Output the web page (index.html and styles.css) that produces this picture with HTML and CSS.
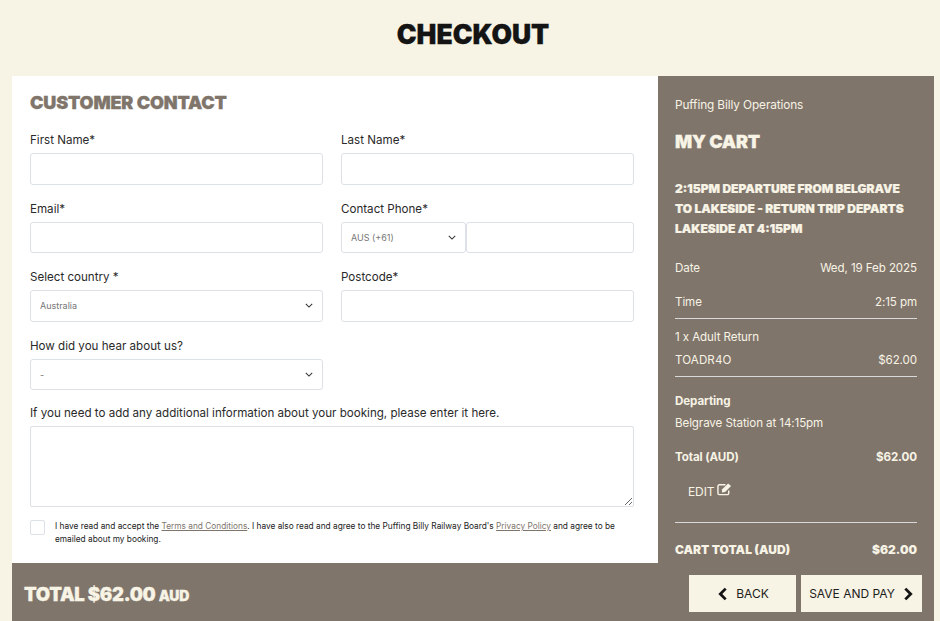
FILE: index.html
```html
<!DOCTYPE html>
<html lang="en">
<head>
<meta charset="utf-8">
<title>Checkout</title>
<link rel="stylesheet" href="styles.css">
</head>
<body>
<h1 class="page-title">CHECKOUT</h1>
<main class="checkout">
  <div class="columns">
    <form class="form">
      <h2 class="form-title">CUSTOMER CONTACT</h2>
      <div class="grid">
        <div class="field"><label class="label">First Name*</label><input class="control" type="text"></div>
        <div class="field"><label class="label">Last Name*</label><input class="control" type="text"></div>
        <div class="field"><label class="label">Email*</label><input class="control" type="text"></div>
        <div class="field"><label class="label">Contact Phone*</label>
          <div class="phone">
            <div class="select-wrap phone-code">
              <select class="control select"><option>AUS (+61)</option></select>
              <svg class="chev" viewBox="0 0 10 6"><polyline points="1,1 5,5 9,1"/></svg>
            </div>
            <input class="control phone-num" type="text">
          </div>
        </div>
        <div class="field"><label class="label">Select country *</label>
          <div class="select-wrap">
            <select class="control select"><option>Australia</option></select>
            <svg class="chev" viewBox="0 0 10 6"><polyline points="1,1 5,5 9,1"/></svg>
          </div>
        </div>
        <div class="field"><label class="label">Postcode*</label><input class="control" type="text"></div>
        <div class="field"><label class="label">How did you hear about us?</label>
          <div class="select-wrap">
            <select class="control select"><option>-</option></select>
            <svg class="chev" viewBox="0 0 10 6"><polyline points="1,1 5,5 9,1"/></svg>
          </div>
        </div>
      </div>
      <div class="field notes"><label class="label">If you need to add any additional information about your booking, please enter it here.</label>
        <textarea class="textarea"></textarea>
      </div>
      <div class="consent">
        <span class="check"></span>
        <p class="consent-text">I have read and accept the <a href="#">Terms and Conditions</a>. I have also read and agree to the Puffing Billy Railway Board's <a href="#">Privacy Policy</a> and agree to be emailed about my booking.</p>
      </div>
    </form>
    <aside class="cart">
      <p class="operator">Puffing Billy Operations</p>
      <h2 class="cart-title">MY CART</h2>
      <h3 class="trip">2:15PM DEPARTURE FROM BELGRAVE TO LAKESIDE - RETURN TRIP DEPARTS LAKESIDE AT 4:15PM</h3>
      <div class="row row-date"><span>Date</span><span>Wed, 19 Feb 2025</span></div>
      <div class="row row-time"><span>Time</span><span>2:15 pm</span></div>
      <div class="item">
        <div>1 x Adult Return</div>
        <div class="row item-code"><span class="code">TOADR4O</span><span>$62.00</span></div>
      </div>
      <div class="depart">
        <div class="strong">Departing</div>
        <div class="depart-text">Belgrave Station at 14:15pm</div>
      </div>
      <div class="row strong row-total"><span>Total (AUD)</span><span>$62.00</span></div>
      <div class="edit">EDIT
        <svg class="edit-icon" viewBox="0 0 16 14"><path class="edit-box" d="M12.5 8.5V11.5A1.5 1.5 0 0 1 11 13H2.5A1.5 1.5 0 0 1 1 11.5V4A1.5 1.5 0 0 1 2.5 2.5H9"/><path class="edit-pen" d="M5.5 7.2 11.9 1 15 3.9 8.6 10.2 5.2 10.6Z"/></svg>
      </div>
      <div class="row cart-total"><span>CART TOTAL (AUD)</span><span>$62.00</span></div>
    </aside>
  </div>
  <footer class="bar">
    <div class="bar-total">TOTAL $62.00 <span class="bar-aud">AUD</span></div>
    <div class="actions">
      <button class="btn btn-back" type="button"><svg class="arrow" viewBox="0 0 9 13"><polyline points="7,1.5 2,6.5 7,11.5"/></svg>BACK</button>
      <button class="btn btn-pay" type="button">SAVE AND PAY<svg class="arrow" viewBox="0 0 9 13"><polyline points="2,1.5 7,6.5 2,11.5"/></svg></button>
    </div>
  </footer>
</main>
</body>
</html>
```
FILE: styles.css
```css
* { box-sizing: border-box; }
html, body { height: 100%; }
body {
  margin: 0;
  background: #f7f3e5;
  font-family: Inter, "Liberation Sans", sans-serif;
  color: #1d1d1b;
  overflow: hidden;
}
.page-title {
  margin: 0 0 0 12px;
  width: 922px;
  height: 76px;
  padding-top: 18px;
  text-align: center;
  font-size: 26.5px;
  line-height: 32px;
  font-weight: 900;
  color: #141414;
  -webkit-text-stroke: 0.3px #141414;
}
.checkout { margin-left: 12px; width: 922px; }
.columns { display: flex; height: 487px; }
.form {
  width: 646px;
  background: #fff;
  padding: 17px 24px 0 18px;
}
.form-title {
  margin: 0 0 18px;
  font-size: 18px;
  line-height: 20px;
  font-weight: 900;
  color: #80756b;
  letter-spacing: -0.15px;
  -webkit-text-stroke: 0.3px #80756b;
}
.grid {
  display: grid;
  grid-template-columns: 293px 293px;
  column-gap: 18px;
  row-gap: 15px;
}
.label {
  display: block;
  height: 18px;
  margin-bottom: 4px;
  font-size: 11.6px;
  line-height: 18px;
  color: #2a2a2a;
}
.field { min-width: 0; }
.control {
  display: block;
  width: 100%;
  height: 31.5px;
  margin: 0;
  padding: 0 9px;
  border: 1px solid #dce0e7;
  border-radius: 3px;
  background: #fff;
  font-family: Inter, "Liberation Sans", sans-serif;
}
.select {
  appearance: none;
  -webkit-appearance: none;
  font-size: 9px;
  color: #777;
}
.select-wrap { position: relative; }
.chev {
  position: absolute;
  right: 10px;
  top: 13px;
  width: 8px;
  height: 5px;
  fill: none;
  stroke: #333;
  stroke-width: 1.3;
}
.phone { display: flex; }
.phone-code { width: 125px; flex: none; }
.phone-num { flex: 1; min-width: 0; }
.notes { margin-top: 14px; }
.textarea {
  display: block;
  width: 604px;
  height: 81px;
  margin: 0;
  border: 1px solid #dce0e7;
  border-radius: 2px;
  background: #fff;
}
.consent { display: flex; gap: 10px; margin-top: 13px; }
.check {
  flex: none;
  width: 15px;
  height: 15px;
  border: 1px solid #dce0e7;
  border-radius: 2px;
}
.consent-text {
  margin: 0;
  width: 570px;
  font-size: 8.3px;
  line-height: 13px;
  color: #222;
}
.consent-text a { color: #80756b; }
.cart {
  width: 276px;
  background: #80756b;
  color: #f7f3e5;
  padding: 21px 17px 0 17px;
  font-size: 11.6px;
  letter-spacing: -0.1px;
}
.operator { margin: 0; font-size: 11.8px; line-height: 17px; }
.cart-title {
  margin: 16px 0 0;
  font-size: 18px;
  line-height: 24px;
  font-weight: 900;
  letter-spacing: -0.2px;
  -webkit-text-stroke: 0.3px #f7f3e5;
}
.trip {
  margin: 25px 0 0;
  max-width: 236px;
  font-size: 12px;
  line-height: 20px;
  font-weight: 900;
  letter-spacing: 0;
  -webkit-text-stroke: 0.2px #f7f3e5;
}
.row { display: flex; justify-content: space-between; line-height: 18px; }
.row-date { margin-top: 20px; }
.row-time { margin-top: 16px; padding-bottom: 7px; border-bottom: 1px solid #d9d9d9; }
.item { padding: 9px 0 7px; line-height: 18px; border-bottom: 1px solid #d9d9d9; }
.item-code { margin-top: 5px; }
.code { letter-spacing: 0.1px; }
.depart { margin-top: 15px; line-height: 18px; }
.strong { font-weight: 700; }
.depart-text { margin-top: 4px; }
.row-total { margin-top: 16px; }
.edit {
  display: flex;
  align-items: center;
  gap: 3px;
  margin-top: 16px;
  padding-left: 13px;
  height: 18px;
  font-size: 12px;
}
.edit-icon { width: 15px; height: 14px; margin-top: -4px; }
.edit-box { fill: none; stroke: #f7f3e5; stroke-width: 1.5; }
.edit-pen { fill: #f7f3e5; }
.cart-total {
  margin-top: 22px;
  padding-top: 18px;
  border-top: 1px solid #d9d9d9;
  font-size: 12px;
  font-weight: 900;
  letter-spacing: 0;
}
.bar {
  display: flex;
  justify-content: space-between;
  align-items: center;
  height: 58px;
  background: #80756b;
  padding: 0 12px;
  color: #f7f3e5;
}
.bar-total {
  font-size: 18.5px;
  font-weight: 900;
  letter-spacing: -0.3px;
  margin-top: 3px;
  -webkit-text-stroke: 0.3px #f7f3e5;
}
.bar-aud { font-size: 14px; }
.actions { display: flex; gap: 5px; margin-top: 3px; }
.btn {
  display: flex;
  align-items: center;
  justify-content: center;
  height: 37px;
  margin: 0;
  padding: 0;
  border: 0;
  background: #f7f3e5;
  font-family: Inter, "Liberation Sans", sans-serif;
  font-size: 12px;
  color: #1d1d1b;
}
.btn-back { width: 107px; gap: 8px; padding-left: 2px; }
.btn-pay { width: 121px; gap: 8px; padding-right: 1px; }
.arrow {
  width: 10px;
  height: 14px;
  fill: none;
  stroke: #141414;
  stroke-width: 2.6;
}
```
